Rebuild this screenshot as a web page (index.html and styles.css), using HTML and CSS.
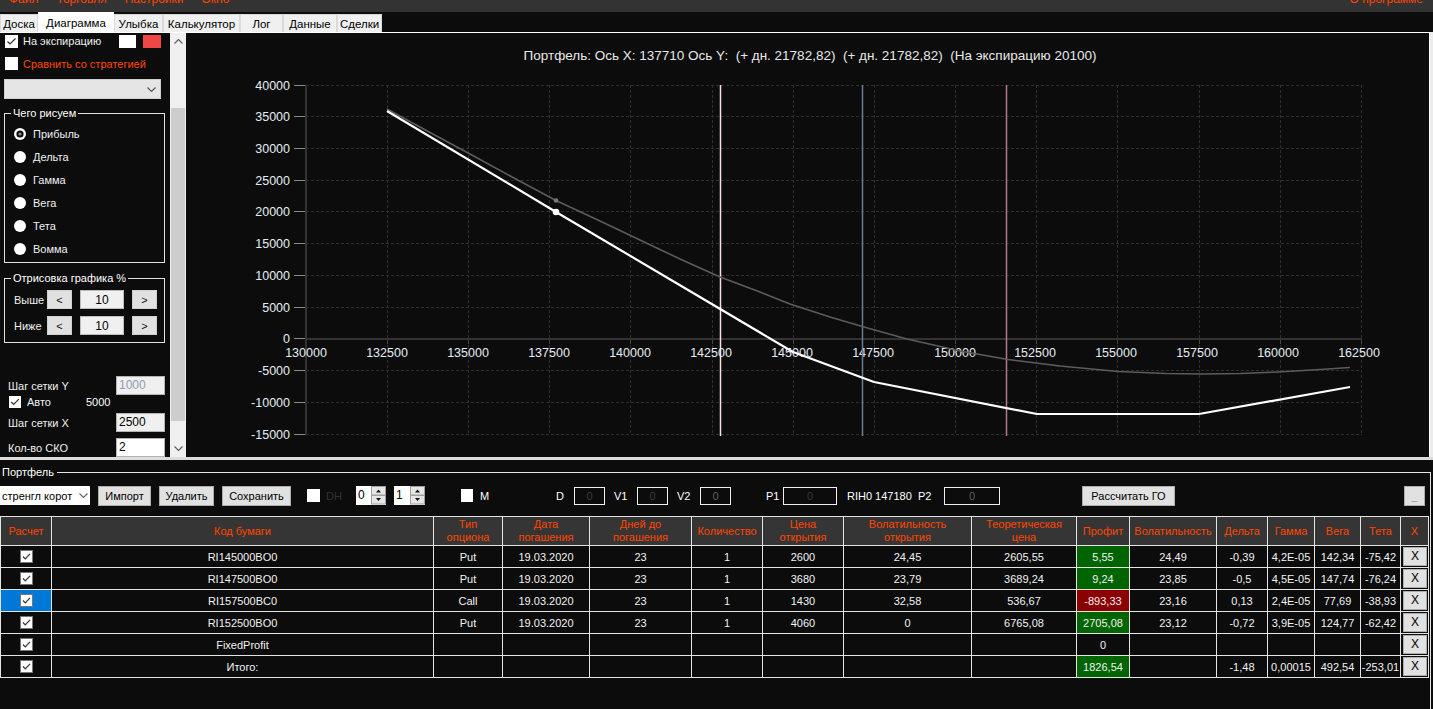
FILE: index.html
```html
<!DOCTYPE html>
<html lang="ru">
<head>
<meta charset="utf-8">
<title>Диаграмма</title>
<link rel="stylesheet" href="styles.css">
</head>
<body>
<div class="menubar">
  <div class="menu-items"><span>Файл</span><span>Торговля</span><span>Настройки</span><span>Окно</span><span class="menu-right">О программе</span></div>
</div>
<div class="tabs">
  <div class="tab w38">Доска</div>
  <div class="tab active w76">Диаграмма</div>
  <div class="tab w49">Улыбка</div>
  <div class="tab w77">Калькулятор</div>
  <div class="tab w43">Лог</div>
  <div class="tab w54">Данные</div>
  <div class="tab w45">Сделки</div>
</div>
<div class="tabwrap">
  <div class="tabpage">
    <div class="lp">
      <div class="lp-row1">
        <svg class="cb" viewBox="0 0 13 13"><rect x="0" y="0" width="13" height="13" fill="#fff"/><path d="M2.5 6.5 L5 9 L10.5 3.5" fill="none" stroke="#333" stroke-width="1.2"/></svg>
        <span class="lp-lbl1">На экспирацию</span>
        <span class="swatch white"></span>
        <span class="swatch red"></span>
      </div>
      <div class="lp-row2">
        <span class="cb-off"></span>
        <span class="lp-lbl2">Сравнить со стратегией</span>
      </div>
      <div class="lp-combo"><svg class="chev" viewBox="0 0 9 5"><polyline points="0.5,0.5 4.5,4.5 8.5,0.5" fill="none" stroke="#555" stroke-width="1.1"/></svg></div>
      <div class="gbox gbox1">
        <div class="gbox-legend">Чего рисуем</div>
        <div class="radios">
          <div class="radio"><svg class="rd" viewBox="0 0 12 12"><circle cx="6" cy="6" r="6" fill="#fff"/><circle cx="6" cy="6" r="3.6" fill="#0c0c0c"/><circle cx="6" cy="6" r="1.6" fill="#8a8a8a"/></svg><span>Прибыль</span></div>
          <div class="radio"><svg class="rd" viewBox="0 0 12 12"><circle cx="6" cy="6" r="6" fill="#fff"/></svg><span>Дельта</span></div>
          <div class="radio"><svg class="rd" viewBox="0 0 12 12"><circle cx="6" cy="6" r="6" fill="#fff"/></svg><span>Гамма</span></div>
          <div class="radio"><svg class="rd" viewBox="0 0 12 12"><circle cx="6" cy="6" r="6" fill="#fff"/></svg><span>Вега</span></div>
          <div class="radio"><svg class="rd" viewBox="0 0 12 12"><circle cx="6" cy="6" r="6" fill="#fff"/></svg><span>Тета</span></div>
          <div class="radio"><svg class="rd" viewBox="0 0 12 12"><circle cx="6" cy="6" r="6" fill="#fff"/></svg><span>Вомма</span></div>
        </div>
      </div>
      <div class="gbox gbox2">
        <div class="gbox-legend">Отрисовка графика %</div>
        <div class="prow first">
          <span class="prow-lbl">Выше</span><span class="sbtn">&lt;</span><span class="pval">10</span><span class="sbtn">&gt;</span>
        </div>
        <div class="prow">
          <span class="prow-lbl">Ниже</span><span class="sbtn">&lt;</span><span class="pval">10</span><span class="sbtn">&gt;</span>
        </div>
      </div>
      <div class="frow frow-y"><span class="frow-lbl">Шаг сетки Y</span><span class="tb tb-dis">1000</span></div>
      <div class="arow">
        <svg class="cb cb12" viewBox="0 0 12 12"><rect x="0" y="0" width="12" height="12" fill="#fff"/><path d="M2.3 6 L4.7 8.5 L9.8 3.2" fill="none" stroke="#333" stroke-width="1.2"/></svg>
        <span class="arow-lbl">Авто</span><span class="arow-val">5000</span>
      </div>
      <div class="frow frow-x"><span class="frow-lbl">Шаг сетки X</span><span class="tb">2500</span></div>
      <div class="frow frow-s"><span class="frow-lbl">Кол-во СКО</span><span class="tb tb-white">2</span></div>
    </div>
    <div class="sb">
      <div class="sb-btn"><svg viewBox="0 0 9 5" class="sb-arr"><polyline points="0.5,4.5 4.5,0.5 8.5,4.5" fill="none" stroke="#606060" stroke-width="1.2"/></svg></div>
      <div class="sb-track"><div class="sb-thumb"></div></div>
      <div class="sb-btn"><svg viewBox="0 0 9 5" class="sb-arr"><polyline points="0.5,0.5 4.5,4.5 8.5,0.5" fill="none" stroke="#606060" stroke-width="1.2"/></svg></div>
    </div>
    <div class="chart">
      <svg class="chart-svg" width="1243" height="424" viewBox="0 0 1243 424">
        <g transform="translate(-186,-33)">
          <text class="title" x="810" y="60" text-anchor="middle">Портфель: Ось X: 137710 Ось Y:  (+ дн. 21782,82)  (+ дн. 21782,82)  (На экспирацию 20100)</text>
          <path class="grid-l" d="M306 85.5H1362M306 116.5H1362M306 148.5H1362M306 180.5H1362M306 211.5H1362M306 243.5H1362M306 275.5H1362M306 307.5H1362M306 370.5H1362M306 402.5H1362M306 434.5H1362"/>
          <path class="grid-l" d="M387.5 85V434M468.5 85V434M549.5 85V434M630.5 85V434M712.5 85V434M793.5 85V434M874.5 85V434M955.5 85V434M1036.5 85V434M1117.5 85V434M1199.5 85V434M1280.5 85V434M1361.5 85V434"/>
          <path class="axis" d="M306 85V435M305 339H1362"/>
          <path class="tick" d="M294 85.5H305M294 116.5H305M294 148.5H305M294 180.5H305M294 211.5H305M294 243.5H305M294 275.5H305M294 307.5H305M294 338.5H305M294 370.5H305M294 402.5H305M294 434.5H305"/>
          <path class="tick2" d="M387.5 340V344M468.5 340V344M549.5 340V344M630.5 340V344M712.5 340V344M793.5 340V344M874.5 340V344M955.5 340V344M1036.5 340V344M1117.5 340V344M1199.5 340V344M1280.5 340V344M1361.5 340V344"/>
          <g class="ylab" text-anchor="end">
            <text x="290" y="90">40000</text>
            <text x="290" y="121">35000</text>
            <text x="290" y="153">30000</text>
            <text x="290" y="185">25000</text>
            <text x="290" y="216">20000</text>
            <text x="290" y="248">15000</text>
            <text x="290" y="280">10000</text>
            <text x="290" y="312">5000</text>
            <text x="290" y="343">0</text>
            <text x="290" y="375">-5000</text>
            <text x="290" y="407">-10000</text>
            <text x="290" y="439">-15000</text>
          </g>
          <g class="xlab" text-anchor="middle">
            <text x="306" y="357">130000</text>
            <text x="387" y="357">132500</text>
            <text x="468" y="357">135000</text>
            <text x="549" y="357">137500</text>
            <text x="630" y="357">140000</text>
            <text x="711" y="357">142500</text>
            <text x="792" y="357">145000</text>
            <text x="873" y="357">147500</text>
            <text x="955" y="357">150000</text>
            <text x="1035" y="357">152500</text>
            <text x="1116" y="357">155000</text>
            <text x="1197" y="357">157500</text>
            <text x="1278" y="357">160000</text>
            <text x="1359" y="357">162500</text>
          </g>
          <path class="vl vl1" d="M720.5 85V436"/>
          <path class="vl vl2" d="M862.5 85V436"/>
          <path class="vl vl3" d="M1006.5 85V436"/>
          <polyline class="today" points="387,109 430,132.5 470,154 513,177.5 556,200.5 600,221 640,240 680,259 720,277 760,292 790,304 830,317 864,327 907,339 960,351 1008,359.5 1060,366 1118,371.5 1166,373.5 1200,374 1240,373.5 1278,372 1320,369.5 1350,367.5"/>
          <polyline class="expir" points="387,111 556,212 793,352 874,382 1037,414 1199,414 1350,387"/>
          <circle cx="556" cy="200.5" r="2.3" fill="#777"/>
          <circle cx="556" cy="212" r="3.3" fill="#fff"/>
        </g>
      </svg>
    </div>
  </div>
</div>
<div class="splitter"></div>
<div class="portfolio">
  <div class="pgroup">
    <div class="legend">Портфель</div>
    <div class="toolbar">
      <div class="combo"><span class="combo-txt">стренгл корот</span><svg class="chev2" viewBox="0 0 9 5"><polyline points="0.5,0.5 4.5,4.5 8.5,0.5" fill="none" stroke="#666" stroke-width="1.1"/></svg></div>
      <span class="btn b-imp">Импорт</span>
      <span class="btn b-del">Удалить</span>
      <span class="btn b-save">Сохранить</span>
      <span class="cb-off tb-cb1"></span>
      <span class="dim t-dh">DH</span>
      <div class="num w30">
        <span class="num-val">0</span>
        <svg class="spin" viewBox="0 0 15 19"><rect x="0.5" y="0.5" width="14" height="8.5" fill="#e6e6e6" stroke="#a0a0a0"/><rect x="0.5" y="9.5" width="14" height="8.5" fill="#e6e6e6" stroke="#a0a0a0"/><path d="M5 6.5L7.5 3.5L10 6.5Z" fill="#111"/><path d="M5 12L7.5 15L10 12Z" fill="#111"/></svg>
      </div>
      <div class="num w31 ml8">
        <span class="num-val">1</span>
        <svg class="spin" viewBox="0 0 15 19"><rect x="0.5" y="0.5" width="14" height="8.5" fill="#e6e6e6" stroke="#a0a0a0"/><rect x="0.5" y="9.5" width="14" height="8.5" fill="#e6e6e6" stroke="#a0a0a0"/><path d="M5 6.5L7.5 3.5L10 6.5Z" fill="#111"/><path d="M5 12L7.5 15L10 12Z" fill="#111"/></svg>
      </div>
      <span class="cb-off tb-cb2"></span>
      <span class="t-m">M</span>
      <span class="t-d">D</span>
      <span class="ibox w31b">0</span>
      <span class="t-v1">V1</span>
      <span class="ibox w31b">0</span>
      <span class="t-v1">V2</span>
      <span class="ibox w31b warm">0</span>
      <span class="t-p1">P1</span>
      <span class="ibox w54b">0</span>
      <span class="t-rih">RIH0 147180</span>
      <span class="t-p2">P2</span>
      <span class="ibox w56b warm">0</span>
      <span class="btn b-go">Рассчитать ГО</span>
      <span class="btn b-min">_</span>
    </div>
    <table class="grid">
      <colgroup>
        <col class="c51"><col class="c382"><col class="c69"><col class="c87"><col class="c102"><col class="c71"><col class="c81"><col class="c128"><col class="c105"><col class="c53"><col class="c87"><col class="c51"><col class="c47"><col class="c46"><col class="c40"><col class="c28">
      </colgroup>
      <thead>
        <tr>
          <th>Расчет</th><th>Код бумаги</th><th>Тип<br>опциона</th><th>Дата<br>погашения</th><th>Дней до<br>погашения</th><th>Количество</th><th>Цена<br>открытия</th><th>Волатильность<br>открытия</th><th>Теоретическая<br>цена</th><th>Профит</th><th>Волатильность</th><th>Дельта</th><th>Гамма</th><th>Вега</th><th>Тета</th><th>X</th>
        </tr>
      </thead>
      <tbody>
        <tr>
          <td><svg class="tcb" viewBox="0 0 13 13"><rect x="0.5" y="0.5" width="12" height="12" fill="#fff" stroke="#777"/><path d="M3 6.5 L5.3 8.8 L10 3.8" fill="none" stroke="#333" stroke-width="1.2"/></svg></td>
          <td>RI145000BO0</td><td>Put</td><td>19.03.2020</td><td>23</td><td>1</td><td>2600</td><td>24,45</td><td>2605,55</td><td class="g">5,55</td><td>24,49</td><td>-0,39</td><td>4,2E-05</td><td>142,34</td><td>-75,42</td><td><span class="xb">X</span></td>
        </tr>
        <tr>
          <td><svg class="tcb" viewBox="0 0 13 13"><rect x="0.5" y="0.5" width="12" height="12" fill="#fff" stroke="#777"/><path d="M3 6.5 L5.3 8.8 L10 3.8" fill="none" stroke="#333" stroke-width="1.2"/></svg></td>
          <td>RI147500BO0</td><td>Put</td><td>19.03.2020</td><td>23</td><td>1</td><td>3680</td><td>23,79</td><td>3689,24</td><td class="g">9,24</td><td>23,85</td><td>-0,5</td><td>4,5E-05</td><td>147,74</td><td>-76,24</td><td><span class="xb">X</span></td>
        </tr>
        <tr>
          <td class="sel"><svg class="tcb" viewBox="0 0 13 13"><rect x="0.5" y="0.5" width="12" height="12" fill="#fff" stroke="#777"/><path d="M3 6.5 L5.3 8.8 L10 3.8" fill="none" stroke="#333" stroke-width="1.2"/></svg></td>
          <td>RI157500BC0</td><td>Call</td><td>19.03.2020</td><td>23</td><td>1</td><td>1430</td><td>32,58</td><td>536,67</td><td class="r">-893,33</td><td>23,16</td><td>0,13</td><td>2,4E-05</td><td>77,69</td><td>-38,93</td><td><span class="xb">X</span></td>
        </tr>
        <tr>
          <td><svg class="tcb" viewBox="0 0 13 13"><rect x="0.5" y="0.5" width="12" height="12" fill="#fff" stroke="#777"/><path d="M3 6.5 L5.3 8.8 L10 3.8" fill="none" stroke="#333" stroke-width="1.2"/></svg></td>
          <td>RI152500BO0</td><td>Put</td><td>19.03.2020</td><td>23</td><td>1</td><td>4060</td><td>0</td><td>6765,08</td><td class="g">2705,08</td><td>23,12</td><td>-0,72</td><td>3,9E-05</td><td>124,77</td><td>-62,42</td><td><span class="xb">X</span></td>
        </tr>
        <tr>
          <td><svg class="tcb" viewBox="0 0 13 13"><rect x="0.5" y="0.5" width="12" height="12" fill="#fff" stroke="#777"/><path d="M3 6.5 L5.3 8.8 L10 3.8" fill="none" stroke="#333" stroke-width="1.2"/></svg></td>
          <td>FixedProfit</td><td></td><td></td><td></td><td></td><td></td><td></td><td></td><td>0</td><td></td><td></td><td></td><td></td><td></td><td><span class="xb">X</span></td>
        </tr>
        <tr>
          <td><svg class="tcb" viewBox="0 0 13 13"><rect x="0.5" y="0.5" width="12" height="12" fill="#fff" stroke="#777"/><path d="M3 6.5 L5.3 8.8 L10 3.8" fill="none" stroke="#333" stroke-width="1.2"/></svg></td>
          <td>Итого:</td><td></td><td></td><td></td><td></td><td></td><td></td><td></td><td class="g">1826,54</td><td></td><td>-1,48</td><td>0,00015</td><td>492,54</td><td>-253,01</td><td><span class="xb">X</span></td>
        </tr>
      </tbody>
    </table>
  </div>
</div>
</body>
</html>
```
FILE: styles.css
```css
* { box-sizing: border-box; }
html, body { margin: 0; padding: 0; }
body {
  width: 1433px;
  height: 709px;
  overflow: hidden;
  background: #0c0c0c;
  font-family: "Liberation Sans", Arial, sans-serif;
  font-size: 11px;
  color: #f0f0f0;
}

/* menu */
.menubar { height: 12px; background: #333; overflow: hidden; }
.menu-items { display: flex; margin-top: -9px; font-size: 12px; line-height: 16px; color: #ff4500; }
.menu-items span { padding: 0 9px; }
.menu-items .menu-right { margin-left: auto; padding-right: 10px; }

/* tabs */
.tabs { display: flex; align-items: flex-end; height: 20px; }
.tab {
  height: 18px;
  background: #f0f0f0;
  border: 1px solid #d9d9d9;
  border-bottom: none;
  color: #000;
  display: flex;
  align-items: center;
  justify-content: center;
  font-size: 11.5px;
}
.tab.active { height: 21px; background: #fff; border-color: #fff; margin-bottom: -1px; position: relative; z-index: 1; }
.w38 { width: 38px; } .w76 { width: 76px; } .w49 { width: 49px; } .w77 { width: 77px; }
.w43 { width: 43px; } .w54 { width: 54px; } .w45 { width: 45px; }

/* tab page */
.tabwrap { display: flex; height: 425px; background: #ececec; }
.tabpage { width: 1430px; height: 425px; display: flex; background: #0c0c0c; border-top: 1px solid #fff; border-right: 1px solid #fff; }

/* left panel */
.lp { width: 170px; height: 424px; overflow: hidden; flex: none; }
.lp-row1 { display: flex; align-items: center; height: 14px; margin-top: 1px; }
.cb { width: 13px; height: 13px; display: block; flex: none; margin-left: 5px; }
.cb12 { width: 12px; height: 12px; margin-left: 9px; }
.lp-lbl1 { margin-left: 5px; width: 96px; }
.swatch { width: 17px; height: 13px; display: block; }
.swatch.white { background: #fff; }
.swatch.red { background: #f04646; width: 18px; margin-left: 7px; }
.lp-row2 { display: flex; align-items: center; height: 13px; margin-top: 9px; }
.cb-off { display: block; width: 13px; height: 13px; background: #fff; flex: none; }
.lp-row2 .cb-off { margin-left: 5px; }
.lp-lbl2 { margin-left: 5px; color: #ff4500; }
.lp-combo {
  margin: 9px 0 0 4px; width: 157px; height: 20px;
  background: #e5e5e5; border: 1px solid #cfcfcf;
  display: flex; align-items: center; justify-content: flex-end; padding-right: 4px;
}
.chev { width: 9px; height: 5px; display: block; }

.gbox { margin-left: 4px; width: 161px; border: 1px solid #e0e0e0; }
.gbox1 { margin-top: 14px; height: 150px; }
.gbox2 { margin-top: 15px; height: 65px; }
.gbox-legend { display: table; margin: -7px 0 0 6px; padding: 0 2px; background: #0c0c0c; line-height: 13px; color: #fff; }
.radios { margin-top: 2px; }
.radio { display: flex; align-items: center; height: 23px; }
.rd { width: 12px; height: 12px; display: block; margin-left: 9px; }
.radio span { margin-left: 7px; }

.prow { display: flex; align-items: center; height: 19px; margin-top: 7px; }
.prow.first { margin-top: 5px; }
.prow-lbl { width: 33px; margin-left: 9px; }
.sbtn { width: 25px; height: 19px; background: #e1e1e1; border: 1px solid #cfcfcf; color: #111; display: flex; align-items: center; justify-content: center; }
.pval { width: 44px; height: 19px; margin: 0 8px; background: #f0f0f0; border: 1px solid #bdbdbd; color: #000; display: flex; align-items: center; justify-content: center; font-size: 12px; }

.frow { display: flex; align-items: center; height: 19px; }
.frow-y { margin-top: 33px; }
.frow-x { margin-top: 4px; }
.frow-s { margin-top: 6px; }
.frow-lbl { width: 116px; padding-left: 8px; }
.tb { width: 49px; height: 19px; background: #f0f0f0; border: 1px solid #b4b4b4; color: #000; padding-left: 2px; line-height: 17px; font-size: 12px; }
.tb-dis { color: #8d9db2; }
.tb-white { background: #fff; }
.arow { display: flex; align-items: center; height: 14px; }
.arow-lbl { margin-left: 6px; width: 59px; }
.arow-val { color: #fff; }

/* scrollbar */
.sb { width: 16px; height: 424px; background: #f0f0f0; display: flex; flex-direction: column; flex: none; }
.sb-btn { height: 17px; display: flex; align-items: center; justify-content: center; }
.sb-arr { width: 9px; height: 5px; display: block; }
.sb-track { flex: 1; padding-top: 58px; display: flex; justify-content: center; }
.sb-thumb { width: 14px; height: 313px; background: #cdcdcd; }

/* chart */
.chart { flex: 1; height: 424px; overflow: hidden; }
.chart-svg { display: block; }
.title { font-family: "Liberation Sans", Arial, sans-serif; font-size: 13.5px; fill: #e8e8e8; white-space: pre; }
.grid-l { stroke: #2f2f2f; stroke-width: 1; stroke-dasharray: 3 2; fill: none; }
.axis { stroke: #333; stroke-width: 2; fill: none; }
.tick { stroke: #8a8a8a; stroke-width: 1; }
.tick2 { stroke: #444; stroke-width: 1; }
.ylab text, .xlab text { font-family: "Liberation Sans", Arial, sans-serif; font-size: 12.5px; fill: #e6ecf2; }
.vl { stroke-width: 1.5; fill: none; }
.vl1 { stroke: #fbdede; }
.vl2 { stroke: #6b7d90; }
.vl3 { stroke: #b27a82; }
.today { fill: none; stroke: #5c5c5c; stroke-width: 1.6; stroke-linejoin: round; }
.expir { fill: none; stroke: #fff; stroke-width: 2.2; stroke-linejoin: round; }

/* splitter */
.splitter { height: 3px; background: #dcdcdc; }

/* portfolio */
.portfolio { height: 249px; }
.pgroup { margin-top: 12px; width: 1431px; height: 237px; border-top: 1px solid #e6e6e6; border-right: 1px solid #e6e6e6; }
.legend { display: table; margin: -7px 0 0 0; padding: 0 3px 0 2px; background: #0c0c0c; line-height: 13px; color: #fff; }

.toolbar { display: flex; align-items: center; height: 21px; margin-top: 6px; }
.combo { width: 90px; height: 19px; background: #fff; display: flex; align-items: center; overflow: hidden; flex: none; }
.combo-txt { width: 77px; overflow: hidden; white-space: nowrap; color: #000; padding-left: 2px; }
.chev2 { width: 9px; height: 5px; display: block; margin-left: 2px; }
.btn { height: 20px; background: #e1e1e1; border: 1px solid #adadad; color: #000; display: flex; align-items: center; justify-content: center; flex: none; }
.b-imp { margin-left: 8px; width: 53px; }
.b-del { margin-left: 8px; width: 55px; }
.b-save { margin-left: 8px; width: 69px; }
.tb-cb1 { margin-left: 16px; }
.dim { color: #333; }
.t-dh { margin-left: 6px; width: 30px; }
.num { height: 19px; display: flex; background: #fff; flex: none; }
.num.w30 { width: 30px; }
.num.w31 { width: 31px; }
.ml8 { margin-left: 8px; }
.num-val { flex: 1; color: #000; padding-left: 2px; line-height: 19px; font-size: 12px; }
.spin { width: 15px; height: 19px; display: block; }
.tb-cb2 { margin-left: 36px; width: 12px; }
.t-m { margin-left: 7px; width: 76px; color: #fff; }
.t-d { width: 18px; color: #fff; }
.t-v1 { margin-left: 9px; width: 23px; color: #fff; }
.t-p1 { margin-left: 35px; width: 17px; color: #fff; }
.t-rih { margin-left: 10px; width: 71px; color: #fff; }
.t-p2 { width: 26px; color: #fff; }
.ibox { height: 18px; border: 1px solid #f0f0f0; background: #0c0c0c; color: #3c3c3c; display: flex; align-items: center; justify-content: center; flex: none; }
.ibox.warm { color: #6a5c44; }
.w31b { width: 31px; }
.w54b { width: 54px; }
.w56b { width: 56px; }
.b-go { margin-left: 82px; width: 93px; }
.b-min { margin-left: 229px; width: 21px; color: #999; }

/* table */
.grid { border-collapse: collapse; table-layout: fixed; width: 1428px; margin-top: 10px; }
.c51 { width: 51px; } .c382 { width: 382px; } .c69 { width: 69px; } .c87 { width: 87px; }
.c102 { width: 102px; } .c71 { width: 71px; } .c81 { width: 81px; } .c128 { width: 128px; }
.c105 { width: 105px; } .c53 { width: 53px; } .c47 { width: 47px; } .c46 { width: 46px; }
.c40 { width: 40px; } .c28 { width: 28px; }
.grid th, .grid td { border: 1px solid #e4e4e4; padding: 0; text-align: center; white-space: nowrap; overflow: hidden; }
.grid th { height: 29px; background: #353535; color: #ff4500; font-weight: normal; line-height: 13px; }
.grid td { height: 22px; color: #f2f2f2; background: #0c0c0c; }
.grid td.g { background: #006400; }
.grid td.r { background: #8b0000; }
.grid td.sel { background: #0078d7; }
.tcb { width: 13px; height: 13px; display: block; margin: 0 auto; }
.xb { display: block; margin: 0 1px 0 2px; height: 19px; background: #e1e1e1; border: 1px solid #adadad; color: #000; line-height: 17px; font-size: 12px; }
```
